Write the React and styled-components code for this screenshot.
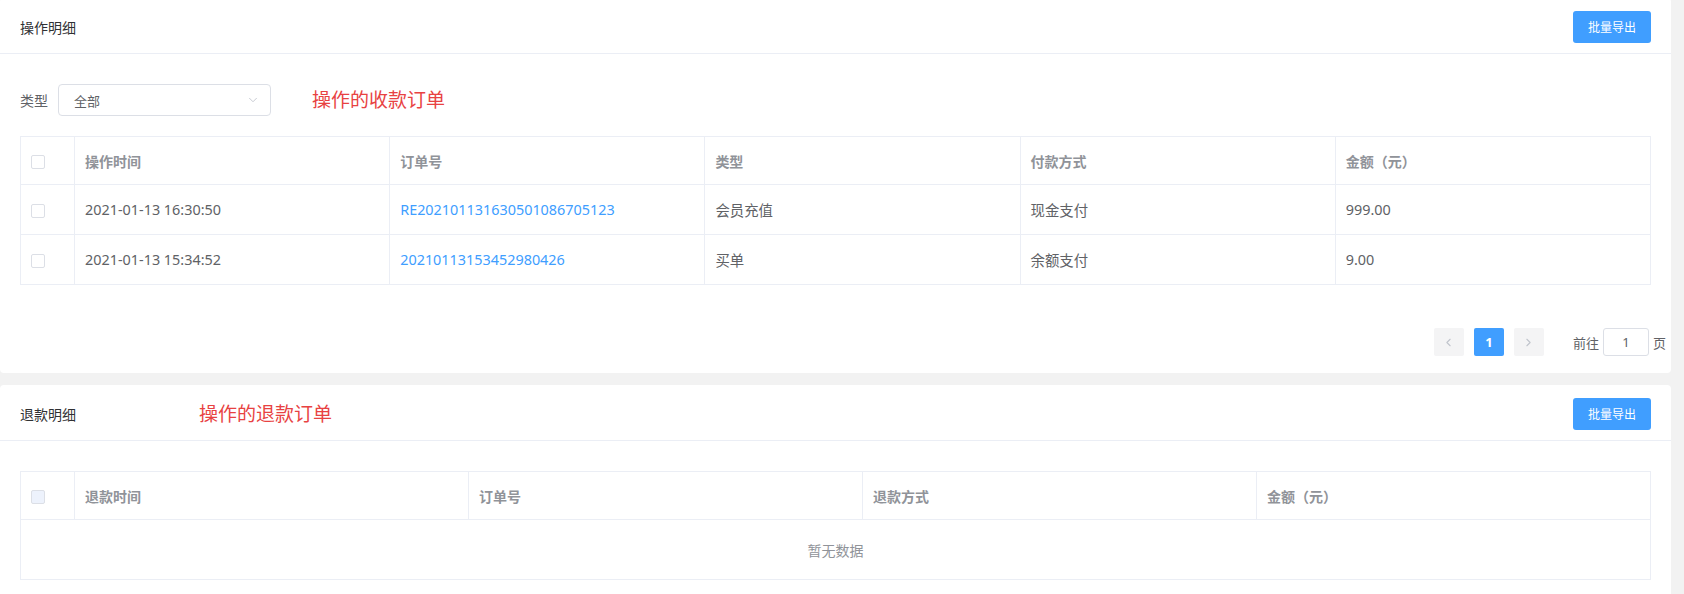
import React from 'react';
import styled, { createGlobalStyle } from 'styled-components';
import { ChevronDown, ChevronLeft, ChevronRight } from 'lucide-react';

const GlobalStyle = createGlobalStyle`
  html, body {
    margin: 0;
    padding: 0;
    background: #f2f2f2;
  }
  body {
    font-family: "Noto Sans", "Noto Sans CJK SC", sans-serif;
    font-size: 14px;
    color: #606266;
  }
`;

const Page = styled.div`
  padding-right: 13px;
  display: flex;
  flex-direction: column;
  gap: 12px;
  margin-top: -2px;
`;

const Card = styled.section`
  background: #fff;
  border-radius: 4px;
`;

const CardHeader = styled.header`
  display: flex;
  align-items: center;
  padding: 13px 20px 10px;
  border-bottom: 1px solid #ebeef5;
`;

const Title = styled.h2`
  margin: 0;
  font-size: 14px;
  font-weight: 400;
  color: #303133;
`;

const Note = styled.span`
  color: #e84242;
  font-size: 19px;
  line-height: 1;
  margin-left: ${(p) => p.$gap || 0}px;
`;

const Spacer = styled.div`
  flex: 1;
`;

const Button = styled.button`
  height: 32px;
  padding: 0 15px;
  border: none;
  border-radius: 3px;
  background: #409eff;
  color: #fff;
  font-family: inherit;
  font-size: 12px;
`;

const CardBody = styled.div`
  padding: 30px 20px ${(p) => p.$bottom || 17}px;
`;

const FilterRow = styled.div`
  display: flex;
  align-items: center;
  margin-bottom: 20px;
`;

const Label = styled.label`
  color: #606266;
  margin-right: 10px;
`;

const Select = styled.div`
  box-sizing: border-box;
  width: 213px;
  height: 32px;
  border: 1px solid #dcdfe6;
  border-radius: 4px;
  display: flex;
  align-items: center;
  justify-content: space-between;
  padding: 0 10px 0 15px;
  color: #606266;
  font-size: 13px;
`;

const Table = styled.table`
  width: 100%;
  table-layout: fixed;
  border-collapse: separate;
  border-spacing: 0;
  border-top: 1px solid #ebeef5;
  border-left: 1px solid #ebeef5;
`;

const Th = styled.th`
  height: 47px;
  padding: 0 10px;
  text-align: left;
  font-weight: 600;
  font-size: 14px;
  color: #909399;
  border-right: 1px solid #ebeef5;
  border-bottom: 1px solid #ebeef5;
`;

const Td = styled.td`
  height: 49px;
  padding: 0 10px;
  font-size: 14.4px;
  color: ${(p) => (p.$link ? '#409eff' : '#606266')};
  border-right: 1px solid #ebeef5;
  border-bottom: 1px solid #ebeef5;
  white-space: nowrap;
`;

const EmptyCell = styled.td`
  height: 57px;
  text-align: center;
  font-size: 14px;
  color: #909399;
  border-right: 1px solid #ebeef5;
  border-bottom: 1px solid #ebeef5;
`;

const Check = styled.span`
  display: inline-block;
  vertical-align: middle;
  box-sizing: border-box;
  width: 14px;
  height: 14px;
  border: 1px solid #dcdfe6;
  border-radius: 2px;
  background: ${(p) => (p.$disabled ? '#edf2fc' : '#fff')};
`;

const Pager = styled.nav`
  display: flex;
  align-items: center;
  justify-content: flex-end;
  margin: 43px -15px 0 0;
  font-size: 13px;
  color: #606266;
`;

const PageBtn = styled.span`
  width: 30px;
  height: 28px;
  margin-left: 10px;
  border-radius: 2px;
  display: flex;
  align-items: center;
  justify-content: center;
  background: ${(p) => (p.$active ? '#409eff' : '#f4f4f5')};
  color: ${(p) => (p.$active ? '#fff' : '#c0c4cc')};
  font-weight: 700;
  font-size: 13px;
  &:first-child {
    margin-left: 0;
  }
`;

const Jumper = styled.span`
  display: flex;
  align-items: center;
  margin-left: 29px;
  gap: 4px;
`;

const JumpInput = styled.span`
  box-sizing: border-box;
  width: 46px;
  height: 28px;
  border: 1px solid #dcdfe6;
  border-radius: 3px;
  display: flex;
  align-items: center;
  justify-content: center;
  color: #606266;
`;

const payRows = [
  { time: '2021-01-13 16:30:50', no: 'RE202101131630501086705123', type: '会员充值', way: '现金支付', amount: '999.00' },
  { time: '2021-01-13 15:34:52', no: '20210113153452980426', type: '买单', way: '余额支付', amount: '9.00' },
];

function DataTable({ columns, rows, emptyText }) {
  return (
    <Table>
      <colgroup>
        <col style={{ width: 54 }} />
        {columns.map((c) => (
          <col key={c} />
        ))}
      </colgroup>
      <thead>
        <tr>
          <Th>
            <Check $disabled={!rows.length} />
          </Th>
          {columns.map((c) => (
            <Th key={c}>{c}</Th>
          ))}
        </tr>
      </thead>
      <tbody>
        {rows.length ? (
          rows.map((r) => (
            <tr key={r.no}>
              <Td>
                <Check />
              </Td>
              <Td>{r.time}</Td>
              <Td $link>{r.no}</Td>
              <Td>{r.type}</Td>
              <Td>{r.way}</Td>
              <Td>{r.amount}</Td>
            </tr>
          ))
        ) : (
          <tr>
            <EmptyCell colSpan={columns.length + 1}>{emptyText}</EmptyCell>
          </tr>
        )}
      </tbody>
    </Table>
  );
}

export default function App() {
  return (
    <>
      <GlobalStyle />
      <Page>
        <Card>
          <CardHeader>
            <Title>操作明细</Title>
            <Spacer />
            <Button>批量导出</Button>
          </CardHeader>
          <CardBody>
            <FilterRow>
              <Label>类型</Label>
              <Select>
                <span>全部</span>
                <ChevronDown size={14} color="#c0c4cc" strokeWidth={1.5} />
              </Select>
              <Note $gap={41}>操作的收款订单</Note>
            </FilterRow>
            <DataTable
              columns={['操作时间', '订单号', '类型', '付款方式', '金额（元）']}
              rows={payRows}
            />
            <Pager>
              <PageBtn>
                <ChevronLeft size={13} strokeWidth={2} />
              </PageBtn>
              <PageBtn $active>1</PageBtn>
              <PageBtn>
                <ChevronRight size={13} strokeWidth={2} />
              </PageBtn>
              <Jumper>
                前往
                <JumpInput>1</JumpInput>
                页
              </Jumper>
            </Pager>
          </CardBody>
        </Card>
        <Card>
          <CardHeader>
            <Title>退款明细</Title>
            <Note $gap={123}>操作的退款订单</Note>
            <Spacer />
            <Button>批量导出</Button>
          </CardHeader>
          <CardBody>
            <DataTable
              columns={['退款时间', '订单号', '退款方式', '金额（元）']}
              rows={[]}
              emptyText="暂无数据"
            />
          </CardBody>
        </Card>
      </Page>
    </>
  );
}
